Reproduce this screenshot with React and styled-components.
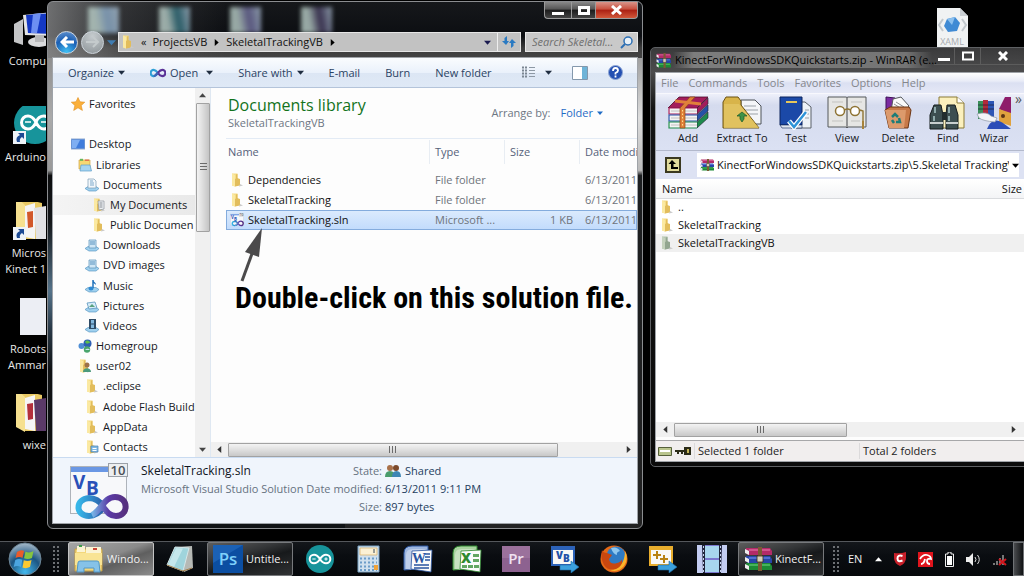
import React from 'react';
import styled, { createGlobalStyle } from 'styled-components';

const GlobalStyle = createGlobalStyle`
  * {
    box-sizing: border-box;
  }
  body {
    margin: 0;
    background: #000;
    font-family: 'Open Sans', 'Noto Sans', sans-serif;
    font-size: 11px;
    line-height: 16px;
    overflow: hidden;
  }
  button, input, select {
    font: inherit;
    color: inherit;
    margin: 0;
    padding: 0;
    border: 0;
    background: none;
  }
  a {
    color: inherit;
    text-decoration: none;
  }
  svg {
    display: block;
    flex: none;
  }
`;

const Screen = styled.div`
  min-height: 100vh;
  display: flex;
  flex-direction: column;
`;

const Desktop = styled.main`
  flex: 1;
  position: relative;
  overflow: hidden;
  background: #000;
`;

const DesktopColumn = styled.div`
  width: 46px;
  padding-top: 10px;
  display: grid;
  grid-auto-rows: 96px;
`;

const DesktopIcon = styled.a`
  display: flex;
  flex-direction: column;
  color: #e8e8e8;
  text-align: right;
  white-space: pre-line;
  overflow: hidden;
`;

const DesktopPicture = styled.span`
  height: 43px;
  flex: none;
  display: flex;
  align-items: flex-end;
  padding-bottom: 5px;
  padding-left: 13px;
`;

const LooseFile = styled.a`
  position: absolute;
  top: 8px;
  right: 56px;
`;

/* ---------- window frames ---------- */

const Window = styled.section`
  position: absolute;
  display: flex;
  flex-direction: column;
  border: 1px solid #8b8d90;
`;

const ExplorerWindow = styled(Window)`
  top: 1px;
  left: 47px;
  right: 381px;
  bottom: 12px;
  padding: 0 4px 4px;
  border-radius: 6px;
  background:
    linear-gradient(90deg, rgba(170, 170, 170, 0.6), rgba(120, 120, 120, 0.3) 12%, transparent 30%) top / 100% 56px no-repeat,
    linear-gradient(#16181b, #0c0e12 34px, #3c3c3c 46px, #444 56px) top / 100% 56px no-repeat,
    linear-gradient(#777, #aaa 22%, #999 32%, #0c0d0e 33%, #15181b 42%, #55738a 55%, #2a3a48 62%, #101214 70%) left / 50% 100% no-repeat,
    linear-gradient(#666, #ddd 22%, #bbb 32%, #1c1e20 33%, #222 100%) right / 50% 100% no-repeat;
`;

const RarWindow = styled(Window)`
  top: 47px;
  right: -6px;
  width: 380px;
  bottom: 74px;
  padding: 0 4px 4px;
  border-color: #5e6063;
  border-radius: 5px;
  background: linear-gradient(#3a3a3b, #4c4c4d 24px, #141414 60px, #0b0b0b);
`;

const Pane = styled.div`
  flex: 1;
  min-height: 0;
  display: flex;
  flex-direction: column;
  border: 1px solid #9fa3a8;
  background: #fdfdfd;
`;

const GhostRow = styled.div`
  position: absolute;
  top: 5px;
  left: 40px;
  display: flex;
  gap: 40px;
  filter: blur(2px);
`;

const Ghost = styled.span`
  width: 31px;
  height: 26px;
  opacity: 0.8;
  background: linear-gradient(80deg, #b9cec8 30%, ${(props) => props.tint} 60%, #a9bccd);
`;

const Caption = styled.div`
  position: relative;
  display: flex;
  justify-content: flex-end;
  height: 29px;
`;

const CaptionButton = styled.button`
  width: ${(props) => props.width ?? '27px'};
  height: 17px;
  display: flex;
  align-items: center;
  justify-content: center;
  border: 1px solid #9b9b9b;
  border-top: 0;
  border-right-width: ${(props) => (props.last ? '1px' : 0)};
  border-radius: ${(props) => props.radius ?? 0};
  background: ${(props) =>
    props.close
      ? 'linear-gradient(#d9948a, #c8503e 45%, #ab2013 50%, #d2583a)'
      : 'linear-gradient(#888, #555 45%, #1c1c1c 50%, #444)'};
`;

const AddressRow = styled.div`
  position: relative;
  height: 26px;
  display: flex;
  align-items: center;
  gap: 4px;
  padding-bottom: 4px;
`;

const RoundButtons = styled.div`
  display: flex;
  align-items: center;
  gap: 3px;
  width: 62px;
  flex: none;
  padding-left: 3px;
`;

const RoundButton = styled.button`
  width: 23px;
  height: 23px;
  flex: none;
  display: grid;
  place-items: center;
  border-radius: 50%;
  border: 1px solid #cfd6dd;
  background: ${(props) =>
    props.active
      ? 'radial-gradient(circle at 50% 95%, #3fc1f5, #1b5fb4 55%, #6f9bd2)'
      : 'radial-gradient(circle at 50% 20%, #c5cbce, #8d9498)'};
`;

const AddressBar = styled.div`
  flex: 1;
  height: 20px;
  min-width: 0;
  display: flex;
  align-items: center;
  gap: 6px;
  padding-left: 2px;
  border: 1px solid #e6e6e6;
  background: #c2c2c2;
  color: #111;
`;

const Refresh = styled.button`
  width: 23px;
  height: 100%;
  display: grid;
  place-items: center;
  border-left: 1px solid #eee;
`;

const Push = styled.span`
  flex: 1;
`;

const SearchBox = styled.label`
  width: 113px;
  height: 20px;
  display: flex;
  align-items: center;
  padding: 0 4px 0 6px;
  border: 1px solid #e6e6e6;
  background: #c9c9c9;
`;

const SearchInput = styled.input`
  flex: 1;
  min-width: 0;
  font-style: italic;
  outline: 0;
  &::placeholder {
    color: #6f6f6f;
    opacity: 1;
  }
`;

/* ---------- explorer body ---------- */

const CommandBar = styled.div`
  height: 30px;
  display: flex;
  align-items: center;
  gap: 25px;
  padding: 0 14px 0 15px;
  border-bottom: 1px solid #b4c4da;
  background: linear-gradient(#fafcfe, #eaf1fb 50%, #dce6f4 52%, #dfe9f6);
  color: #2b4363;
  white-space: nowrap;
`;

const Command = styled.button`
  display: flex;
  align-items: center;
  gap: ${(props) => props.gap ?? '4px'};
`;

const ViewCommands = styled.div`
  display: flex;
  align-items: center;
  gap: 20px;
  margin-left: auto;
`;

const Browser = styled.div`
  flex: 1;
  min-height: 0;
  display: flex;
`;

const Tree = styled.nav`
  width: 142px;
  flex: none;
  display: flex;
  flex-direction: column;
  padding-top: 6px;
  overflow: hidden;
  color: #16191e;
`;

const TreeGap = styled.span`
  flex: 1;
`;

const TreeItem = styled.a`
  flex: 1;
  display: flex;
  align-items: center;
  gap: 4px;
  padding-left: ${(props) => 18 + props.depth * 7}px;
  white-space: nowrap;
  background: ${(props) => (props.selected ? 'linear-gradient(90deg, #f4f4f4, #e9e9e9)' : 'none')};
`;

const VScroll = styled.div`
  width: 15px;
  flex: none;
  display: flex;
  flex-direction: column;
  align-items: center;
  background: #f0f0f0;
`;

const HScroll = styled.div`
  height: 15px;
  flex: none;
  display: flex;
  align-items: center;
  background: #f0f0f0;
`;

const ScrollButton = styled.button`
  width: ${(props) => props.width ?? '15px'};
  height: 15px;
  flex: none;
  display: grid;
  place-items: center;
`;

const Thumb = styled.span`
  flex: ${(props) => props.share};
  display: grid;
  place-items: center;
  border: 1px solid #a2a2a2;
  border-radius: 1px;
  ${(props) =>
    props.vertical
      ? 'width: 14px; background: linear-gradient(90deg, #f3f3f3, #dcdcdc 50%, #c4c4c4);'
      : 'height: 14px; background: linear-gradient(#f3f3f3, #dedede 50%, #c8c8c8);'}
`;

const Track = styled.span`
  flex: ${(props) => props.share};
`;

const Library = styled.div`
  flex: 1;
  min-width: 0;
  display: flex;
  flex-direction: column;
  border-left: 1px solid #dfe8f2;
`;

const LibraryHead = styled.header`
  height: 51px;
  display: flex;
  align-items: center;
  justify-content: space-between;
  margin-left: 15px;
  padding: 0 34px 0 2px;
  border-bottom: 1px solid #e3ebf5;
`;

const LibraryTitle = styled.h1`
  margin: 0;
  font-size: 16px;
  font-weight: 400;
  line-height: 20px;
  color: #12731b;
`;

const Muted = styled.span`
  color: #6d7683;
`;

const Arrange = styled.div`
  display: flex;
  align-items: center;
  gap: 10px;
  color: #6d7683;
`;

const ArrangeButton = styled.button`
  display: flex;
  align-items: center;
  gap: 4px;
  color: #1f6bc5;
`;

const ListArea = styled.div`
  flex: 1;
  min-height: 0;
  padding-left: 15px;
  overflow: hidden;
  position: relative;
`;

const Table = styled.table`
  width: 100%;
  table-layout: fixed;
  border-collapse: collapse;
  white-space: nowrap;
  color: #6f747b;
`;

const HeadCell = styled.th`
  height: 31px;
  padding: 0 0 6px;
  font-weight: 400;
  text-align: left;
  color: #56627a;
  overflow: hidden;
  width: ${(props) => props.width ?? 'auto'};
`;

const HeadLabel = styled.span`
  display: block;
  height: 24px;
  line-height: 24px;
  padding-left: ${(props) => (props.first ? '2px' : '5px')};
  border-left: ${(props) => (props.first ? 0 : '1px solid #e8edf3')};
`;

const Row = styled.tr`
  background: ${(props) => (props.selected ? 'linear-gradient(#dcebfd, #c1dbfc)' : 'none')};
  outline: ${(props) => (props.selected ? '1px solid #84acdd' : 0)};
  outline-offset: -1px;
`;

const Cell = styled.td`
  height: 20px;
  padding: 0 6px;
  overflow: hidden;
  text-align: ${(props) => props.align ?? 'left'};
`;

const FileName = styled.a`
  display: flex;
  align-items: center;
  gap: 4px;
  margin-left: -2px;
  color: #111;
`;

const Note = styled.p`
  position: absolute;
  top: 139px;
  left: 24px;
  margin: 0;
  font-family: 'Roboto Condensed', 'Liberation Sans Narrow', 'DejaVu Sans Condensed', sans-serif;
  font-size: 30px;
  font-weight: 700;
  line-height: 40px;
  white-space: nowrap;
  color: #000;
`;

const NoteArrow = styled.svg`
  position: absolute;
  top: 88px;
  left: 28px;
`;

const Details = styled.footer`
  height: 66px;
  flex: none;
  display: flex;
  gap: 12px;
  padding: 4px 0 0 16px;
  border-top: 1px solid #c9dbf1;
  background: #f0f5fc;
  color: #24405f;
`;

const DetailGrid = styled.dl`
  margin: 0;
  display: grid;
  grid-template-columns: 162px 76px auto;
  grid-auto-rows: 18px;
  align-items: center;
  column-gap: 3px;
  white-space: nowrap;
`;

const DetailName = styled.dt`
  font-size: 12px;
  color: #10161f;
`;

const DetailKey = styled.dt`
  color: #66727f;
  text-align: ${(props) => props.align ?? 'right'};
  grid-column: ${(props) => props.column ?? 2};
`;

const DetailValue = styled.dd`
  margin: 0;
  display: flex;
  align-items: center;
  gap: 4px;
`;

/* ---------- archive window ---------- */

const RarTitle = styled.div`
  height: 24px;
  flex: none;
  display: flex;
  align-items: center;
  gap: 2px;
  padding-left: 1px;
  color: #000;
  white-space: nowrap;
`;

const RarName = styled.span`
  flex: 1;
  min-width: 0;
  padding-left: 2px;
  background: linear-gradient(90deg, transparent, #7d7d7d 8%, #747474 90%, transparent);
`;

const RarCaption = styled.div`
  display: flex;
  align-self: flex-start;
`;

const RarCaptionButton = styled.button`
  width: ${(props) => props.width};
  height: 17px;
  display: grid;
  place-items: center;
  border-bottom: 1px solid #5c5c5c;
  & + & {
    border-left: 1px solid #5c5c5c;
  }
`;

const MenuBar = styled.div`
  height: 20px;
  flex: none;
  display: flex;
  align-items: center;
  gap: 10px;
  padding-left: 5px;
  background: linear-gradient(#fff, #e9ecf7 40%, #dbe0f2 50%, #e5e8f6);
  color: #84868c;
`;

const ToolBar = styled.div`
  height: 58px;
  flex: none;
  display: flex;
  padding: 2px 0 0 7px;
  background: linear-gradient(#eef0fa, #d5dbee 20%, #dbe1f3);
  border-top: 1px solid #f8f8fd;
  border-bottom: 1px solid #b3b9cc;
`;

const Tool = styled.button`
  width: ${(props) => props.width ?? '50px'};
  flex: none;
  display: flex;
  flex-direction: column;
  align-items: center;
  color: #16181d;
  overflow: hidden;
  white-space: nowrap;
`;

const More = styled.button`
  align-self: flex-start;
  font-size: 14px;
  line-height: 6px;
  color: #555;
`;

const PathRow = styled.div`
  height: 28px;
  flex: none;
  display: flex;
  align-items: center;
  padding: 0 5px 0 9px;
  gap: 16px;
  background: #dde2f3;
`;

const PathBox = styled.label`
  flex: 1;
  height: 24px;
  min-width: 0;
  display: flex;
  align-items: center;
  gap: 3px;
  padding: 0 0 0 3px;
  background: #fff;
`;

const PathSelect = styled.select`
  flex: 1;
  min-width: 0;
  appearance: none;
  overflow: hidden;
  color: #111;
`;

const RarTable = styled.table`
  width: 100%;
  border-collapse: collapse;
  color: #111;
`;

const RarHead = styled.th`
  height: 18px;
  padding: 0 2px 0 6px;
  font-weight: 400;
  text-align: ${(props) => props.align ?? 'left'};
  background: linear-gradient(#fff, #f3f4f6);
  border-bottom: 1px solid #d9dbde;
`;

const RarCell = styled.td`
  height: 18px;
  padding: 0 0 0 6px;
  background: ${(props) => (props.selected ? '#f0f0f0' : 'none')};
`;

const RarBody = styled.div`
  flex: 1;
  min-height: 0;
  padding-top: 1px;
  background: #fff;
`;

const StatusBar = styled.footer`
  height: 21px;
  flex: none;
  display: flex;
  align-items: center;
  margin-top: 3px;
  padding-left: 2px;
  border-top: 1px solid #a7a7a9;
  background: #f1eeee;
  color: #222;
`;

const StatusCell = styled.span`
  flex: ${(props) => props.grow ?? '0 0 165px'};
  padding-left: 3px;
  border-left: 1px solid #dcdadb;
`;

/* ---------- task bar ---------- */

const TaskBar = styled.nav`
  height: 35px;
  flex: none;
  display: flex;
  align-items: center;
  border-top: 1px solid #55585c;
  background: linear-gradient(#14171b, #0a0d11 40%, #06080b);
  color: #f2f2f2;
`;

const TaskSlot = styled.button`
  width: ${(props) => props.width ?? '49px'};
  height: 34px;
  flex: none;
  display: grid;
  place-items: center;
`;

const TaskButton = styled.button`
  width: 86px;
  height: 34px;
  flex: none;
  display: flex;
  align-items: center;
  gap: 3px;
  margin: 0 2px;
  padding-left: 5px;
  border: 1px solid ${(props) => (props.active ? '#c4c4c4' : '#77797c')};
  border-radius: 2px;
  background: ${(props) =>
    props.active
      ? 'linear-gradient(160deg, #a5a5a5, #8a8a8a 45%, #5f5f5f 60%, #8b8b8b)'
      : 'linear-gradient(165deg, #5d5d5d, #343638 35%, #17191b 55%, #303234)'};
  white-space: nowrap;
`;

const Grip = styled.span`
  width: 9px;
  height: 29px;
  flex: none;
  margin: 0 5px 0 ${(props) => props.left ?? '2px'};
  background: radial-gradient(circle, #6d7074 0 1px, transparent 1px) 0 0 / 4px 4px;
`;

const Tray = styled.div`
  flex: 1;
  height: 100%;
  display: flex;
  align-items: center;
  justify-content: space-between;
  padding: 0 6px 0 2px;
`;

const ShowDesktop = styled.button`
  width: 11px;
  height: 34px;
  flex: none;
  border: 1px solid #6f7275;
  background: linear-gradient(90deg, #4a4c4f, #101214);
`;

/* ---------- drawings ---------- */

function Caret({ dir = 'down', size = 7, color = '#1f2d40' }) {
  const turn = { down: 0, up: 180, left: 90, right: 270 }[dir];
  return (
    <svg width={size} height={size} viewBox="0 0 8 8" aria-hidden="true">
      <path d="M0 2h8L4 6.500z" fill={color} transform={`rotate(${turn} 4 4)`} />
    </svg>
  );
}

function GripMark({ vertical }) {
  return (
    <svg width="8" height="8" viewBox="0 0 8 8" aria-hidden="true">
      <path d="M.5 0v7M3.500 0v7M6.500 0v7" stroke="#6b6b6b" transform={vertical ? 'rotate(90 4 4)' : undefined} />
    </svg>
  );
}

function Folder({ faded, extra }) {
  const light = faded ? '#c5d2bd' : '#fbe9a2';
  const mid = faded ? '#b4c3ad' : '#f5dc85';
  const dark = faded ? '#93a690' : '#e2bd5c';
  return (
    <svg width="14" height="14" viewBox="0 0 14 14" aria-hidden="true">
      <path d="M2 .5h5.500V12L5 13.500l-3-1z" fill={mid} />
      <path d="M2 .5L5 2v11.500l-3-1z" fill={light} />
      <path d="M7 5l3 1v6.500l-5 1V6z" fill={dark} />
      <path d="M6 1.500l1.500-.5v11l-1.500.5z" fill={dark} />
      <path d="M10 11l3 1.500-4 1z" fill="#c9c9c9" />
      {extra === 'doc' && <path d="M6 3h6v8l-5 1z" fill="#eef1f4" stroke="#8d949b" strokeWidth=".7" />}
      {extra === 'doc' && <path d="M7.500 5h3M7.500 7h3M7.500 9h3" stroke="#6c747c" strokeWidth=".8" />}
      {extra === 'user' && (
        <g>
          <circle cx="9" cy="6" r="2.500" fill="#9c7148" />
          <path d="M5 13c0-5 8-5 8 0z" fill="#4c9a7c" />
        </g>
      )}
      {extra === 'card' && <path d="M6 6h7v6H6z" fill="#7fb9e4" stroke="#4a81af" strokeWidth=".7" />}
      {extra === 'card' && <path d="M7.500 8.500h4M7.500 10.500h4" stroke="#fff" />}
    </svg>
  );
}

function TreeIcon({ kind }) {
  if (kind.startsWith('folder')) return <Folder extra={kind.split('-')[1]} />;
  const tray = <path d="M0 10.500l3-2h8l3 2-3 2.500H4z" fill="#9fd0ee" stroke="#4f8fbd" strokeWidth=".6" />;
  const shapes = {
    star: <path d="M7 .5l2 4.300 4.800.4-3.600 3.300 1.200 4.900L7 10.800l-4.300 2.600 1.200-4.900L.3 5.200l4.700-.4z" fill="#fbb03b" stroke="#e08e1e" strokeWidth=".6" />,
    desktop: (
      <g>
        <path d="M0 2h14v10H0z" fill="#3f7cdc" stroke="#8fa9cf" />
        <path d="M1 3h8L5 11H1z" fill="#7eaef2" />
      </g>
    ),
    libraries: (
      <g>
        <path d="M1 2h11v9H1z" fill="#f7d873" stroke="#cfa544" strokeWidth=".7" />
        <path d="M2 .8h3v2H2z" fill="#65b75a" />
        <path d="M7 1.500h4v1.500H7z" fill="#e0764f" />
        <path d="M3 7h9l1.500 6H2z" fill="#a6d4f1" stroke="#5c9dc9" strokeWidth=".7" />
      </g>
    ),
    documents: (
      <g>
        {tray}
        <path d="M3 1h6l2 2v7H3z" fill="#f2f7fb" stroke="#7d9cb5" strokeWidth=".7" />
        <path d="M5 3h3M5 5h4M5 7h4" stroke="#7ca8cb" />
      </g>
    ),
    drive: (
      <g>
        {tray}
        <path d="M4 2h7v8H4z" fill="#cfe6f5" stroke="#6499bf" strokeWidth=".8" />
        <path d="M5 4h5M5 6h5" stroke="#5690bd" />
      </g>
    ),
    music: (
      <g>
        {tray}
        <path d="M8 1v8" stroke="#1f70ba" strokeWidth="1.500" />
        <path d="M8 1c.5 2 3 2 3 5-1-1.500-2-1.500-3-2z" fill="#1f70ba" />
        <ellipse cx="6" cy="9.500" rx="2.500" ry="1.900" fill="#2f8ad2" />
      </g>
    ),
    pictures: (
      <g>
        {tray}
        <path d="M2 4l8-1 2 6-8 1z" fill="#d7ecfa" stroke="#5b95bd" strokeWidth=".8" />
        <path d="M4 8l3-3 3 3z" fill="#5aa17e" />
      </g>
    ),
    videos: (
      <g>
        {tray}
        <path d="M4 0h7v10H4z" fill="#2e4b66" />
        <path d="M6 1h3v3.500H6zM6 5.500h3V9H6z" fill="#83b9df" />
      </g>
    ),
    home: (
      <g>
        <circle cx="3.500" cy="7" r="3" fill="#4f8fd6" />
        <circle cx="9.500" cy="4.500" r="4" fill="#2d5fb4" />
        <path d="M7 3c2-3 5-1 5 1-2 0-3 2-5-1z" fill="#5cbf4c" />
        <circle cx="9" cy="10.500" r="3.200" fill="#4aa56d" />
        <path d="M7 11c2-2 4-1 5 0z" fill="#cbe7f6" />
      </g>
    ),
  };
  return (
    <svg width="14" height="14" viewBox="0 0 14 14" aria-hidden="true">
      {shapes[kind]}
    </svg>
  );
}

function Infinity({ width = 16, height = 10 }) {
  return (
    <svg width={width} height={height} viewBox="0 0 52 28" aria-hidden="true">
      <path d="M26 14C20 6 15 4 12 4a10 10 0 000 20c6 0 10-6 14-10" fill="none" stroke="#2f9fd6" strokeWidth="7" />
      <path d="M18 21c8-6 12-17 22-17a10 10 0 010 20c-5 0-10-4-14-10" fill="none" stroke="#5a3296" strokeWidth="7" />
      <path d="M12 24c7 0 10-6 14-10" fill="none" stroke="#3b66b8" strokeWidth="7" />
    </svg>
  );
}

function SolutionIcon({ size }) {
  return (
    <svg width={size} height={size} viewBox="0 0 60 60" aria-hidden="true">
      <defs>
        <linearGradient id="loopA" x1="0" x2="1">
          <stop offset="0" stopColor="#37b6e8" />
          <stop offset="1" stopColor="#2b5ca8" />
        </linearGradient>
        <linearGradient id="loopB" x1="0" x2="1">
          <stop offset="0" stopColor="#77b7e8" />
          <stop offset=".5" stopColor="#5a3aa5" />
          <stop offset="1" stopColor="#56307f" />
        </linearGradient>
      </defs>
      <rect x="1.500" y="4.500" width="56" height="47" fill="#f7f8fa" stroke="#aeb3ba" />
      <rect x="2" y="5" width="38" height="5" fill="#6a97e4" />
      <rect x="39.500" y="1.500" width="19" height="13" fill="#eceef0" stroke="#9aa0a8" />
      <text x="49" y="13" textAnchor="middle" fontSize="13" fontWeight="600" fill="#4a5058">10</text>
      <text x="4" y="27" fontSize="19" fontWeight="700" fill="#2a50b8">V</text>
      <text x="17" y="33" fontSize="19" fontWeight="700" fill="#2a50b8">B</text>
      <path d="M35 45c-5-7-10-9-15-9-14 1-14 18 0 18 8 0 12-5 15-9" fill="none" stroke="url(#loopA)" strokeWidth="6" />
      <path d="M23 53c9-4 12-18 23-18 14 0 14 19 1 19-6 0-9-4-13-9" fill="none" stroke="url(#loopB)" strokeWidth="6" />
    </svg>
  );
}

function Books({ width = 20, height = 18, strap = '#e0803a' }) {
  return (
    <svg width={width} height={height} viewBox="0 0 42 34" preserveAspectRatio="none" aria-hidden="true">
      <path d="M1 12L12 1h29L30 12z" fill="#a31d5b" stroke="#4d0c2c" strokeWidth=".8" />
      {[
        ['#a31d5b', 12],
        ['#2452a8', 19],
        ['#1d8a4c', 26],
      ].map(([color, y]) => (
        <g key={y}>
          <path d={`M30 ${y}L41 ${y - 10}v6L30 ${y + 6}z`} fill={color} stroke="#1d1d2a" strokeWidth=".6" />
          <path d={`M1 ${y}h29v6H1z`} fill="#f4f4f4" />
          <path d={`M30 ${y}H2v6h28`} fill="none" stroke={color} strokeWidth="1.200" />
          <path d={`M4 ${y + 3}h26`} stroke="#b5b5b5" strokeWidth=".8" />
        </g>
      ))}
      <path d="M13 12L23 1h5L18 12v20h-5z" fill={strap} stroke="#8d4a15" strokeWidth=".7" />
      <path d="M8 5l26 3" stroke={strap} strokeWidth="3" />
      <path d="M15.500 14v17" stroke="#ffe08a" strokeWidth="1" strokeDasharray="1.500 2" />
    </svg>
  );
}

// small archive icon: three coloured spines with a belt
function BooksSmall({ width, height }) {
  return (
    <svg width={width} height={height} viewBox="0 0 28 24" preserveAspectRatio="none" aria-hidden="true">
      {[
        ['#b32b68', '#d8649a', 1],
        ['#2746a8', '#5f7fe0', 9],
        ['#1c8a35', '#56c06a', 16],
      ].map(([color, pale, y]) => (
        <g key={y}>
          <path d={`M2 ${y}h24l2 3v4H4L1 ${y + 4}z`} fill={color} />
          <path d={`M5 ${y + 2}h21`} stroke={pale} strokeWidth="1.500" />
          <path d={`M1 ${y + 1}l4 2v4l-4-2z`} fill="#eee" />
        </g>
      ))}
      <path d="M14 0h4v24h-4z" fill="#7a5a34" />
      <path d="M13 9h6v6h-6z" fill="#d6d0b8" stroke="#3a2c18" strokeWidth=".8" />
    </svg>
  );
}

function ToolIcon({ kind }) {
  if (kind === 'add') return <Books width={42} height={34} />;
  const shapes = {
    extract: (
      <g>
        <path d="M20 4h14l6 6v18H20z" fill="#f4f6f8" stroke="#4d5258" />
        <path d="M23 10h12M23 14h14M23 18h14" stroke="#9aa1a8" />
        <path d="M2 6l3-5h12l3 4v4L38 32H2z" fill="#d8b44a" stroke="#6b5212" />
        <path d="M3 8h15l20 24H3z" fill="#e3c564" opacity=".8" />
        <path d="M16 20l5-4 5 4-3 0v3l-2 3-2-3v-3z" fill="#3d9247" stroke="#1d5a26" strokeWidth=".7" />
      </g>
    ),
    test: (
      <g>
        <path d="M16 6h14l6 5v21H16z" fill="#eef2f7" stroke="#5a6068" />
        <path d="M30 14h4M30 18h4M30 22h4" stroke="#9aa1a8" />
        <path d="M5 1h22v28H5z" fill="#1b49a8" stroke="#0c255c" />
        <path d="M5 29h22v3H7z" fill="#dfe5ee" stroke="#0c255c" strokeWidth=".6" />
        <path d="M11 6h11" stroke="#e6c65a" strokeWidth="2" />
        <path d="M14 25l5 6L31 16" fill="none" stroke="#fff" strokeWidth="5" />
        <path d="M14 25l5 6L31 16" fill="none" stroke="#2d93d8" strokeWidth="2.500" />
      </g>
    ),
    view: (
      <g>
        <path d="M2 1h18q1 0 1 1 0-1 1-1h18v30H22l-1 1-1-1H2z" fill="#e6e6e4" stroke="#55585b" />
        <path d="M21 2v29" stroke="#77797b" strokeWidth="1.500" />
        <path d="M6 6h11M25 6h11M6 25h11M25 25h9" stroke="#c3c3c0" />
        <circle cx="14" cy="15" r="4.500" fill="#fff" stroke="#8f7434" strokeWidth="1.500" />
        <circle cx="29" cy="15" r="4.500" fill="#fff" stroke="#8f7434" strokeWidth="1.500" />
        <path d="M18.500 14q3-2 6 0M34 14l3 1v14" fill="none" stroke="#8f7434" strokeWidth="1.400" />
        <path d="M36 25h2v8h-2z" fill="#a7823a" />
      </g>
    ),
    remove: (
      <g>
        <path d="M9 1l9 1-4 12H9z" fill="#7a2aa0" stroke="#3e1056" />
        <path d="M16 3l8-2 8 9-4 5H14z" fill="#fafafa" stroke="#55585c" />
        <path d="M19 6l8 5M17 8l8 5" stroke="#8d8d92" />
        <path d="M8 14l5-3h19l2 3-3 18H12z" fill="#c77948" stroke="#6a3413" />
        <path d="M8 14h21l-2 18H12z" fill="#dc9a6c" />
        <path d="M15 21l3-3 3 3M22 22l1 4h-4M17 27l-2-3" fill="none" stroke="#1e7d78" strokeWidth="2.500" />
      </g>
    ),
    find: (
      <g>
        <path d="M12 1h18l7 6v25H12z" fill="#fbf0bd" stroke="#8b7b37" />
        <path d="M30 1v6h7" fill="#fff" stroke="#8b7b37" />
        <path d="M7 9h7l2 10v14H3V19z" fill="#3c4e50" stroke="#151c1d" />
        <path d="M20 9h8l3 10v14H19V19z" fill="#3c4e50" stroke="#151c1d" />
        <path d="M15 16h5v8h-5z" fill="#222d2e" />
        <path d="M8 11v6M22 11v6M7 20v5M22 20v5" stroke="#8faaab" strokeWidth="2" />
        <path d="M3 27h13M19 27h12" stroke="#c8cfcf" strokeWidth="2" />
      </g>
    ),
    wizard: (
      <g>
        <path d="M5 5h5v18H5z" fill="#3a8f5a" />
        <path d="M10 4h5v19h-5z" fill="#b22a3c" />
        <path d="M15 5h6v18h-6z" fill="#2c55b5" />
        <path d="M5 9h16M5 13h16" stroke="#1d1d30" strokeWidth=".7" />
        <path d="M38 1h-6l-6 12 12 6z" fill="#8e1c6a" />
        <path d="M26 13l12 4v13l-12-4z" fill="#e0a23e" />
        <path d="M14 33c4-10 10-10 16-6l8 6z" fill="#2b4db8" />
        <path d="M4 18q10-3 14 2l6 2-2 4q-12-1-16-4z" fill="#f2f4f8" stroke="#8c96a4" strokeWidth=".7" />
        <circle cx="30" cy="20" r="2" fill="#5b3517" />
      </g>
    ),
  };
  return (
    <svg width="42" height="34" viewBox="0 0 42 34" aria-hidden="true">
      {shapes[kind]}
    </svg>
  );
}

function PcIcon() {
  return (
    <svg width="48" height="36" viewBox="0 0 48 36" aria-hidden="true">
      <path d="M1 12l9-5v26l-9-3z" fill="#c4c5c7" />
      <path d="M10 3l30-3v24l-28-1z" fill="#e3e4e6" />
      <path d="M13 3l26-2v21l-24-1z" fill="#1438c4" />
      <path d="M20 2l8-1-4 20h-6z" fill="#6d8ff2" />
      <ellipse cx="26" cy="30" rx="11" ry="5" fill="#d9dadc" />
      <path d="M22 23h9v7h-9z" fill="#b7b8ba" />
    </svg>
  );
}

function ArduinoIcon({ size }) {
  return (
    <svg width={size} height={size} viewBox="0 0 42 42" aria-hidden="true">
      <circle cx="21" cy="21" r="21" fill="#17949b" />
      <path d="M21 21c-3-5-6-6.500-9-6.500a6.500 6.500 0 000 13c3 0 6-1.500 9-6.500s6-6.500 9-6.500a6.500 6.500 0 010 13c-3 0-6-1.500-9-6.500z" fill="none" stroke="#fff" strokeWidth="3" />
      <path d="M9.500 21h5M27.500 21h5M30 18.500v5" stroke="#fff" strokeWidth="1.500" />
    </svg>
  );
}

function Shortcut({ children, width, height }) {
  return (
    <svg width={width} height={height} viewBox={`0 0 ${width} ${height}`} aria-hidden="true">
      {children}
      <rect x="0" y={height - 13} width="13" height="13" fill="#eef3f8" />
      <path d={`M4 ${height - 2}q-2-5 3-7l-2-2h6v6l-2-2q-3 2-2 5z`} fill="#1c4a94" />
    </svg>
  );
}

function OpenFolder({ tint }) {
  return (
    <g>
      <path d="M3 1l26 6v36l-18 0z" fill="#e9c964" />
      <path d="M12 10l10-3v36l-10-2z" fill="#f5f5f5" />
      <path d="M14 16l6-1v16l-5 1z" fill={tint} />
      <path d="M21 12l19-3v34H23z" fill={tint === '#d2582a' ? '#e2e2e5' : '#5b3a68'} />
      <path d="M3 1l9 8v35l-9-5z" fill="#f6e08f" />
    </g>
  );
}

function Orb() {
  return (
    <svg width="34" height="34" viewBox="0 0 34 34" aria-hidden="true">
      <defs>
        <radialGradient id="orb" cx=".5" cy=".9" r=".9">
          <stop offset="0" stopColor="#44b9ee" />
          <stop offset=".55" stopColor="#1c5582" />
          <stop offset="1" stopColor="#a9bccb" />
        </radialGradient>
      </defs>
      <circle cx="17" cy="17" r="16" fill="url(#orb)" stroke="#6d8596" />
      <path d="M9 10q4-3 7-1l-1.500 7q-3-2-7 0z" fill="#ea5b2a" />
      <path d="M17.500 9.500q4 2 8-.5L24 16q-4 2-8 .3z" fill="#86c440" />
      <path d="M7.300 18q3.500-2 7-.2L13 25q-4-2-7.300 0z" fill="#4ba5e0" />
      <path d="M15.800 18.300q4 1.700 7.700-.3L22 25q-4 2-7.500.5z" fill="#fbc92f" />
    </svg>
  );
}

function Office({ letter, color, pale }) {
  return (
    <svg width="30" height="28" viewBox="0 0 30 28" aria-hidden="true">
      <path d="M1 25V8q0-7 8-7h16v22z" fill={pale} stroke={color} />
      <path d="M3 24V10q0-6 7-6h13L8 25z" fill="#fff" opacity=".35" />
      <path d="M9 6l20-1-1 22-20-3z" fill="#fbfbfb" stroke={color} strokeWidth=".8" />
      <text x="9" y="18" fontSize="14" fontWeight="800" fill={color} fontFamily={letter === 'W' ? 'Liberation Serif' : 'Open Sans'}>{letter}</text>
      {letter === 'W' ? (
        <path d="M22 9h5M22 12h5M22 15h5M11 20h15M11 23h15" stroke={color} strokeWidth="1.500" />
      ) : (
        <path d="M21 9h6v3h-6zM21 14h6v3h-6zM10 20h5v3h-5zM16 20h5v3h-5zM22 20h5v3h-5z" fill={color} opacity=".75" />
      )}
    </svg>
  );
}

function Express({ color, children }) {
  return (
    <svg width="30" height="28" viewBox="0 0 30 28" aria-hidden="true">
      <path d="M2 3h22v17H2z" fill="#f8f8f6" stroke={color} strokeWidth="2" />
      <path d="M1 1h24v4H1z" fill={color} />
      {children}
      <path d="M10 20h11v-4l8 6-8 6v-3H10z" fill="#3ba0dd" stroke="#1f6aa3" strokeWidth=".6" />
    </svg>
  );
}

function TaskIcon({ kind }) {
  if (kind === 'arduino') return <ArduinoIcon size={28} />;
  if (kind === 'word') return <Office letter="W" color="#2a54a0" pale="#9db6df" />;
  if (kind === 'excel') return <Office letter="X" color="#2f8a2f" pale="#a9d3a0" />;
  if (kind === 'vb')
    return (
      <Express color="#2c62b8">
        <text x="6" y="14" fontSize="10" fontWeight="800" fill="#2352a8">V</text>
        <text x="13" y="17" fontSize="10" fontWeight="800" fill="#2352a8">B</text>
      </Express>
    );
  if (kind === 'cpp')
    return (
      <Express color="#e8ad2d">
        <path d="M5 10h8M9 6v8M12 14h8M16 10v8" stroke="#b88212" strokeWidth="2" />
      </Express>
    );
  const shapes = {
    notepad: (
      <g>
        <path d="M9 2l17-1 1 22-9 4z" fill="#b6b9b5" />
        <path d="M9 2l14 1-6 23-16-6z" fill="#9fd4dc" stroke="#d5e6e8" />
        <path d="M10 3l7 .5L8 22l-6-2z" fill="#d6f0f2" opacity=".7" />
        <path d="M1 20l16 6 9-3" fill="none" stroke="#a47f4b" />
      </g>
    ),
    calc: (
      <g>
        <path d="M4 1h21v26H4z" fill="#cfe0ee" stroke="#7ba2c2" />
        <path d="M6 3h17v7H6z" fill="#fbf1d5" stroke="#d7ae63" strokeWidth=".7" />
        <path d="M20 4v4" stroke="#3b4a59" />
        <path d="M6 13.500h17M6 17.500h17M6 21.500h17M6 25h17" stroke="#6b9cc8" strokeWidth="2" strokeDasharray="2 2" />
        <path d="M20 20h4v5h-4z" fill="#f0a33a" />
      </g>
    ),
    premiere: (
      <g>
        <path d="M1 1h28v26H1z" fill="#8d6290" />
        <path d="M1 1h28v12H1z" fill="#a57ba5" opacity=".6" />
        <text x="15" y="19" textAnchor="middle" fontSize="15" fontWeight="600" fill="#f0e2f2">Pr</text>
      </g>
    ),
    firefox: (
      <g>
        <circle cx="15" cy="14" r="13.500" fill="#e56a17" />
        <circle cx="17" cy="11" r="9.500" fill="#2f7bc4" />
        <path d="M12 3q6-2 9 3-4 1-3 4-4-1-6-7z" fill="#8fc7ee" />
        <path d="M3 5q1 3 5 3l5 2-3 4q1 6 8 4 4-1 5-4 2 8-6 10-8 2-12-4-4-7-2-15z" fill="#c9470f" />
        <path d="M26 6q4 8-1 15-6 7-14 4 8 0 11-5 4-6 4-14z" fill="#fbb52b" />
      </g>
    ),
    film: (
      <g>
        <path d="M0 0h30v28H0z" fill="#7b78cf" />
        <path d="M0 0h5l3 28H0zM30 0h-5l-3 28h8z" fill="#c3cdf2" />
        <path d="M5 0h3v28H6zM22 0h3l-1 28h-2z" fill="#20243a" />
        <path d="M8 1h14v12H8zM8 15h14v12H8z" fill="#a8d6ee" />
        <path d="M6.500 1v27M23.500 1v27" stroke="#c7d3ef" strokeWidth="1" strokeDasharray="2 2" />
      </g>
    ),
    explorer: (
      <g>
        <path d="M1 4h27v22H1z" fill="#f3d77c" stroke="#c59f44" />
        <path d="M3 1h8v6H3z" fill="#fbf4d4" />
        <path d="M5 1h3M15 3h3" stroke="#3a9c49" strokeWidth="2" />
        <path d="M12 2h15v6H12z" fill="#fbf4d4" />
        <path d="M19 4h4" stroke="#c94436" strokeWidth="2" />
        <path d="M1 8h27v12H1z" fill="#f9e494" />
        <path d="M4 18q0-2 2-2h17q2 0 2 2l1 9h-6v-4H10v4H3z" fill="#86c2e8" stroke="#5297c6" />
      </g>
    ),
    photoshop: (
      <g>
        <path d="M0 0h30v28H0z" fill="#0b4ea2" />
        <path d="M0 0h30L0 18z" fill="#2b74c8" opacity=".5" />
        <text x="15" y="20" textAnchor="middle" fontSize="17" fontWeight="600" fill="#7fd1fb">Ps</text>
      </g>
    ),
  };
  return (
    <svg width="30" height="28" viewBox="0 0 30 28" aria-hidden="true">
      {shapes[kind]}
    </svg>
  );
}

/* ---------- data ---------- */

const tree = [
  { label: 'Desktop', icon: 'desktop', depth: 0 },
  { label: 'Libraries', icon: 'libraries', depth: 1 },
  { label: 'Documents', icon: 'documents', depth: 2 },
  { label: 'My Documents', icon: 'folder-doc', depth: 3, selected: true },
  { label: 'Public Documen', icon: 'folder', depth: 3 },
  { label: 'Downloads', icon: 'drive', depth: 2 },
  { label: 'DVD images', icon: 'drive', depth: 2 },
  { label: 'Music', icon: 'music', depth: 2 },
  { label: 'Pictures', icon: 'pictures', depth: 2 },
  { label: 'Videos', icon: 'videos', depth: 2 },
  { label: 'Homegroup', icon: 'home', depth: 1 },
  { label: 'user02', icon: 'folder-user', depth: 1 },
  { label: '.eclipse', icon: 'folder', depth: 2 },
  { label: 'Adobe Flash Build', icon: 'folder', depth: 2 },
  { label: 'AppData', icon: 'folder', depth: 2 },
  { label: 'Contacts', icon: 'folder-card', depth: 2 },
];

const files = [
  { name: 'Dependencies', type: 'File folder', size: '', date: '6/13/2011' },
  { name: 'SkeletalTracking', type: 'File folder', size: '', date: '6/13/2011' },
  { name: 'SkeletalTracking.sln', type: 'Microsoft ...', size: '1 KB', date: '6/13/2011', selected: true },
];

const tools = [
  { label: 'Add', icon: 'add' },
  { label: 'Extract To', icon: 'extract', width: '58px' },
  { label: 'Test', icon: 'test' },
  { label: 'View', icon: 'view', width: '52px' },
  { label: 'Delete', icon: 'remove' },
  { label: 'Find', icon: 'find' },
  { label: 'Wizar', icon: 'wizard', width: '42px' },
];

const pinned = ['arduino', 'calc', 'word', 'excel', 'premiere', 'vb', 'firefox', 'cpp', 'film'];

function DesktopIcons() {
  return (
    <DesktopColumn>
      <DesktopIcon href="#computer">
        <DesktopPicture><PcIcon /></DesktopPicture>
        Compu
      </DesktopIcon>
      <DesktopIcon href="#arduino">
        <DesktopPicture>
          <Shortcut width={42} height={42}>
            <circle cx="22" cy="21" r="21" fill="#17949b" />
            <path d="M23 20c-3-5-5-6-8-6a6 6 0 000 13c3 0 6-2 8-7s5-6 8-6a6 6 0 010 13c-3 0-6-2-8-7z" fill="none" stroke="#fff" strokeWidth="3" />
            <path d="M12 20h6M28 20h6" stroke="#fff" strokeWidth="1.500" />
          </Shortcut>
        </DesktopPicture>
        Arduino
      </DesktopIcon>
      <DesktopIcon href="#kinect">
        <DesktopPicture><Shortcut width={40} height={44}><OpenFolder tint="#d2582a" /></Shortcut></DesktopPicture>
        {'Micros\nKinect 1'}
      </DesktopIcon>
      <DesktopIcon href="#robots">
        <DesktopPicture>
          <svg width="40" height="42" viewBox="0 0 40 42" aria-hidden="true">
            <path d="M7 2h33v39H7z" fill="#eceef4" />
            <path d="M7 1.500h33" stroke="#8f949c" strokeWidth="2" strokeDasharray="1 1" />
          </svg>
        </DesktopPicture>
        {'Robots\nAmmar'}
      </DesktopIcon>
      <DesktopIcon href="#wixel">
        <DesktopPicture><svg width="40" height="44" viewBox="0 0 40 44" aria-hidden="true"><OpenFolder tint="#b3303c" /></svg></DesktopPicture>
        wixe
      </DesktopIcon>
    </DesktopColumn>
  );
}

function Explorer() {
  return (
    <ExplorerWindow>
      <GhostRow>
        <Ghost tint="#86a6c4" />
        <Ghost tint="#2c6a77" />
        <Ghost tint="#6a6798" />
        <Ghost tint="#42385c" />
      </GhostRow>
      <Caption>
        <CaptionButton aria-label="Minimize" radius="0 0 0 4px">
          <svg width="12" height="10"><path d="M0 7h12v3H0z" fill="#fff" /></svg>
        </CaptionButton>
        <CaptionButton aria-label="Maximize" width="24px">
          <svg width="12" height="9"><path d="M1.500 1.500h9v6h-9z" fill="none" stroke="#fff" strokeWidth="3" /></svg>
        </CaptionButton>
        <CaptionButton aria-label="Close" width="43px" radius="0 0 4px 0" close last>
          <svg width="11" height="10"><path d="M1 1l9 8M10 1L1 9" stroke="#fff" strokeWidth="3" /></svg>
        </CaptionButton>
      </Caption>
      <AddressRow>
        <RoundButtons>
          <RoundButton aria-label="Back" active>
            <svg width="14" height="12"><path d="M7 1L2 6l5 5M2 6h12" fill="none" stroke="#fff" strokeWidth="3" /></svg>
          </RoundButton>
          <RoundButton aria-label="Forward">
            <svg width="14" height="12"><path d="M7 1l5 5-5 5M0 6h12" fill="none" stroke="#c4cacc" strokeWidth="2" /></svg>
          </RoundButton>
          <Caret size={9} color="#3f7cb0" />
        </RoundButtons>
        <AddressBar>
          <Folder />
          <span>«</span>
          <a href="#projects">ProjectsVB</a>
          <Caret dir="right" color="#000" />
          <a href="#tracking">SkeletalTrackingVB</a>
          <Caret dir="right" color="#000" />
          <Push />
          <Caret color="#1b1b50" />
          <Refresh aria-label="Refresh">
            <svg width="14" height="12" viewBox="0 0 14 12">
              <path d="M5 0v5h2L4 9 0 5h2.500V2zM9 12V7H7l3-4 4 4h-2.500v3z" fill="#2a7ac2" />
            </svg>
          </Refresh>
        </AddressBar>
        <SearchBox>
          <SearchInput aria-label="Search" placeholder="Search Skeletal..." />
          <svg width="13" height="13" viewBox="0 0 13 13">
            <circle cx="8" cy="5" r="4" fill="#e9f1f8" stroke="#2c6fb4" strokeWidth="1.500" />
            <path d="M5 8l-4 4" stroke="#2c6fb4" strokeWidth="2" />
          </svg>
        </SearchBox>
      </AddressRow>
      <Pane>
        <CommandBar>
          <Command>Organize <Caret /></Command>
          <Command><Infinity /> Open <Push /><Caret /></Command>
          <Command>Share with <Caret /></Command>
          <Command>E-mail</Command>
          <Command>Burn</Command>
          <Command>New folder</Command>
          <ViewCommands>
            <Command aria-label="Change view" gap="9px">
              <svg width="15" height="13" viewBox="0 0 15 13">
                <path d="M1 1.500h5M1 4.500h5M1 7.500h5M1 10.500h5" stroke="#7b8692" strokeWidth="2" strokeDasharray="2 1" />
                <path d="M8 1.500h6M8 4.500h6M8 7.500h6M8 10.500h6" stroke="#8d98a4" />
              </svg>
              <Caret />
            </Command>
            <Command aria-label="Preview pane">
              <svg width="16" height="14" viewBox="0 0 16 14">
                <path d="M.5.500h15v13H.5z" fill="#fff" stroke="#8498ac" />
                <path d="M10 1h5v12h-5z" fill="#6fb4d8" />
              </svg>
            </Command>
            <Command aria-label="Help">
              <svg width="15" height="15" viewBox="0 0 15 15">
                <circle cx="7.500" cy="7.500" r="7" fill="#2450b2" stroke="#8ea6d4" />
                <path d="M5 6q0-3 2.500-3T10 5.500q0 1.500-2.500 2.500v1.500M7.500 10.500v2" fill="none" stroke="#fff" strokeWidth="1.800" />
              </svg>
            </Command>
          </ViewCommands>
        </CommandBar>
        <Browser>
          <Tree aria-label="Folders">
            <TreeItem href="#favorites" depth={0}><TreeIcon kind="star" />Favorites</TreeItem>
            <TreeGap />
            {tree.map((item) => (
              <TreeItem href="#folder" key={item.label} depth={item.depth} selected={item.selected}>
                <TreeIcon kind={item.icon} />
                {item.label}
              </TreeItem>
            ))}
          </Tree>
          <VScroll>
            <ScrollButton aria-label="Scroll up"><Caret dir="up" color="#444" /></ScrollButton>
            <Thumb share={128} vertical><GripMark vertical /></Thumb>
            <Track share={212} />
            <ScrollButton aria-label="Scroll down"><Caret color="#444" /></ScrollButton>
          </VScroll>
          <Library>
            <LibraryHead>
              <div>
                <LibraryTitle>Documents library</LibraryTitle>
                <Muted>SkeletalTrackingVB</Muted>
              </div>
              <Arrange>
                Arrange by:
                <ArrangeButton>Folder <Caret size={6} color="#1f6bc5" /></ArrangeButton>
              </Arrange>
            </LibraryHead>
            <ListArea>
              <Table>
                <thead>
                  <tr>
                    <HeadCell><HeadLabel first>Name</HeadLabel></HeadCell>
                    <HeadCell width="75px"><HeadLabel>Type</HeadLabel></HeadCell>
                    <HeadCell width="75px"><HeadLabel>Size</HeadLabel></HeadCell>
                    <HeadCell width="58px"><HeadLabel>Date modi</HeadLabel></HeadCell>
                  </tr>
                </thead>
                <tbody>
                  {files.map((file) => (
                    <Row key={file.name} selected={file.selected}>
                      <Cell>
                        <FileName href="#file">
                          {file.selected ? <SolutionIcon size={14} /> : <Folder />}
                          {file.name}
                        </FileName>
                      </Cell>
                      <Cell>{file.type}</Cell>
                      <Cell align="right">{file.size}</Cell>
                      <Cell>{file.date}</Cell>
                    </Row>
                  ))}
                </tbody>
              </Table>
              <NoteArrow width="26" height="56" viewBox="0 0 26 56" aria-hidden="true">
                <path d="M3 54L14 24" stroke="#4b4a4b" strokeWidth="3" />
                <path d="M23 1L6 25l14 5z" fill="#4b4a4b" />
              </NoteArrow>
              <Note>Double-click on this solution file.</Note>
            </ListArea>
            <HScroll>
              <ScrollButton width="17px" aria-label="Scroll left"><Caret dir="left" color="#333" /></ScrollButton>
              <Thumb share={330}><GripMark /></Thumb>
              <Track share={62} />
              <ScrollButton width="17px" aria-label="Scroll right"><Caret dir="right" color="#333" /></ScrollButton>
            </HScroll>
          </Library>
        </Browser>
        <Details>
          <SolutionIcon size={60} />
          <DetailGrid>
            <DetailName>SkeletalTracking.sln</DetailName>
            <DetailKey>State:</DetailKey>
            <DetailValue>
              <svg width="16" height="14" viewBox="0 0 16 14">
                <circle cx="5" cy="4" r="3" fill="#a9714a" />
                <path d="M0 13q0-6 5-6t5 6z" fill="#4a9c6c" />
                <circle cx="11" cy="4" r="3" fill="#7c4a2c" />
                <path d="M7 13q0-6 4.500-6t4.500 6z" fill="#3e86b4" />
              </svg>
              Shared
            </DetailValue>
            <DetailKey column={1} align="left">Microsoft Visual Studio Solution</DetailKey>
            <DetailKey>Date modified:</DetailKey>
            <DetailValue>6/13/2011 9:11 PM</DetailValue>
            <DetailKey>Size:</DetailKey>
            <DetailValue>897 bytes</DetailValue>
          </DetailGrid>
        </Details>
      </Pane>
    </ExplorerWindow>
  );
}

function Archive() {
  return (
    <RarWindow>
      <RarTitle>
        <BooksSmall width={15} height={15} />
        <RarName>KinectForWindowsSDKQuickstarts.zip - WinRAR (e...</RarName>
        <RarCaption>
          <RarCaptionButton width="20px" aria-label="Minimize">
            <svg width="12" height="10"><path d="M0 7h12v3H0z" fill="#fff" /></svg>
          </RarCaptionButton>
          <RarCaptionButton width="26px" aria-label="Maximize">
            <svg width="12" height="10"><path d="M1 1.500h10v7H1z" fill="none" stroke="#fff" strokeWidth="2" /></svg>
          </RarCaptionButton>
          <RarCaptionButton width="45px" aria-label="Close">
            <svg width="10" height="10"><path d="M1 1l8 8M9 1L1 9" stroke="#fff" strokeWidth="3" /></svg>
          </RarCaptionButton>
        </RarCaption>
      </RarTitle>
      <Pane>
        <MenuBar>
          {['File', 'Commands', 'Tools', 'Favorites', 'Options', 'Help'].map((name) => (
            <button key={name}>{name}</button>
          ))}
        </MenuBar>
        <ToolBar>
          {tools.map((tool) => (
            <Tool key={tool.label} width={tool.width}>
              <ToolIcon kind={tool.icon} />
              {tool.label}
            </Tool>
          ))}
          <More aria-label="More tools">»</More>
        </ToolBar>
        <PathRow>
          <button aria-label="Up one level">
            <svg width="16" height="16" viewBox="0 0 16 16">
              <path d="M1 1h14v14H1z" fill="#e1dc9d" stroke="#3b3920" strokeWidth="2" />
              <path d="M7 3L3.500 7H6v5h7v-2H8.500V7h2.500z" fill="#000" />
            </svg>
          </button>
          <PathBox>
            <BooksSmall width={14} height={12} />
            <PathSelect aria-label="Path">
              <option>{'KinectForWindowsSDKQuickstarts.zip\\5.Skeletal Tracking\\S'}</option>
            </PathSelect>
            <Caret color="#000" />
          </PathBox>
        </PathRow>
        <RarBody>
          <RarTable>
            <thead>
              <tr><RarHead>Name</RarHead><RarHead align="right">Size</RarHead></tr>
            </thead>
            <tbody>
              {['..', 'SkeletalTracking', 'SkeletalTrackingVB'].map((name, index) => (
                <tr key={name}>
                  <RarCell selected={index === 2} colSpan={2}>
                    <FileName href="#entry"><Folder faded={index === 2} />{name}</FileName>
                  </RarCell>
                </tr>
              ))}
            </tbody>
          </RarTable>
        </RarBody>
        <HScroll>
          <ScrollButton width="18px" aria-label="Scroll left"><Caret dir="left" color="#333" /></ScrollButton>
          <Thumb share={173}><GripMark /></Thumb>
          <Track share={156} />
          <ScrollButton width="22px" aria-label="Scroll right"><Caret dir="right" color="#333" /></ScrollButton>
        </HScroll>
        <StatusBar>
          <svg width="36" height="12" viewBox="0 0 36 12">
            <path d="M.5 2.500h13v8H.5z" fill="#b9c48d" stroke="#56603a" />
            <path d="M2 6h10" stroke="#fff" strokeWidth="2" />
            <path d="M17 5h10v2h-2v2h-2V7h-2v2h-2V7h-2zM26 2h7v8h-7z" fill="#2b2b18" />
            <path d="M29 4h2v4h-2z" fill="#c4b456" />
          </svg>
          <StatusCell>Selected 1 folder</StatusCell>
          <StatusCell grow="1">Total 2 folders</StatusCell>
        </StatusBar>
      </Pane>
    </RarWindow>
  );
}

function Taskbar() {
  return (
    <TaskBar aria-label="Task bar">
      <TaskSlot width="50px" aria-label="Start"><Orb /></TaskSlot>
      <Grip />
      <TaskButton active><TaskIcon kind="explorer" />Windo...</TaskButton>
      <TaskSlot aria-label="Notepad"><TaskIcon kind="notepad" /></TaskSlot>
      <TaskButton><TaskIcon kind="photoshop" />Untitle...</TaskButton>
      {pinned.map((kind) => (
        <TaskSlot key={kind} aria-label={kind}><TaskIcon kind={kind} /></TaskSlot>
      ))}
      <TaskButton><BooksSmall width={28} height={24} />KinectF...</TaskButton>
      <Grip left="6px" />
      <Tray>
        <span>EN</span>
        <Caret dir="up" color="#fff" />
        <svg width="12" height="14" viewBox="0 0 12 14">
          <path d="M0 1q6 1 12-1v6q0 5-6 8-6-3-6-8z" fill="#c8202a" />
          <path d="M8.500 4q-5-1.500-5 2.500t5 2" fill="none" stroke="#fff" strokeWidth="2" />
        </svg>
        <svg width="15" height="15" viewBox="0 0 15 15">
          <path d="M0 0h15v15H0z" fill="#e0141c" />
          <path d="M2 7q3-5 7-4 4 1 4 4-4-1-4 2t3 3" fill="none" stroke="#fff" strokeWidth="1.800" />
          <path d="M3 12q3 0 4-5" fill="none" stroke="#fff" strokeWidth="1.800" />
        </svg>
        <svg width="9" height="15" viewBox="0 0 9 15">
          <path d="M3 0h3v2h2.500v12.500h-8V2H3z" fill="none" stroke="#eee" />
          <path d="M2 4h5v9H2z" fill="#fff" />
        </svg>
        <svg width="15" height="13" viewBox="0 0 15 13">
          <path d="M0 4h3l4-4v13L3 9H0z" fill="#eee" />
          <path d="M9 4q2 2.500 0 5M11.500 2q3.500 4.500 0 9" fill="none" stroke="#ddd" />
        </svg>
        <svg width="14" height="13" viewBox="0 0 14 13">
          <path d="M1 10v2M4 8v4M7 5v7M10 2v10" stroke="#777" strokeWidth="2" />
          <path d="M6 6l7 6M13 6l-7 6" stroke="#d2151c" strokeWidth="2" />
        </svg>
      </Tray>
      <ShowDesktop aria-label="Show desktop" />
    </TaskBar>
  );
}

export default function App() {
  return (
    <Screen>
      <GlobalStyle />
      <Desktop>
        <DesktopIcons />
        <LooseFile href="#xaml">
          <svg width="31" height="42" viewBox="0 0 31 42" aria-label="XAML file">
            <path d="M0 0h23l8 8v34H0z" fill="#f0f2f3" />
            <path d="M23 0v8h8z" fill="#c9ced2" />
            <path d="M6 11l-4 6 4 6M25 11l4 6-4 6" fill="none" stroke="#c2c8cd" strokeWidth="2" />
            <path d="M10 11l8-2 5 6-3 8-9 1-4-6z" fill="#3f8ad4" />
            <path d="M10 11l8-2-3 8z" fill="#8cc0ee" />
            <text x="15" y="37" textAnchor="middle" fontSize="9" fill="#a8acb0">XAML</text>
          </svg>
        </LooseFile>
        <Explorer />
        <Archive />
      </Desktop>
      <Taskbar />
    </Screen>
  );
}
